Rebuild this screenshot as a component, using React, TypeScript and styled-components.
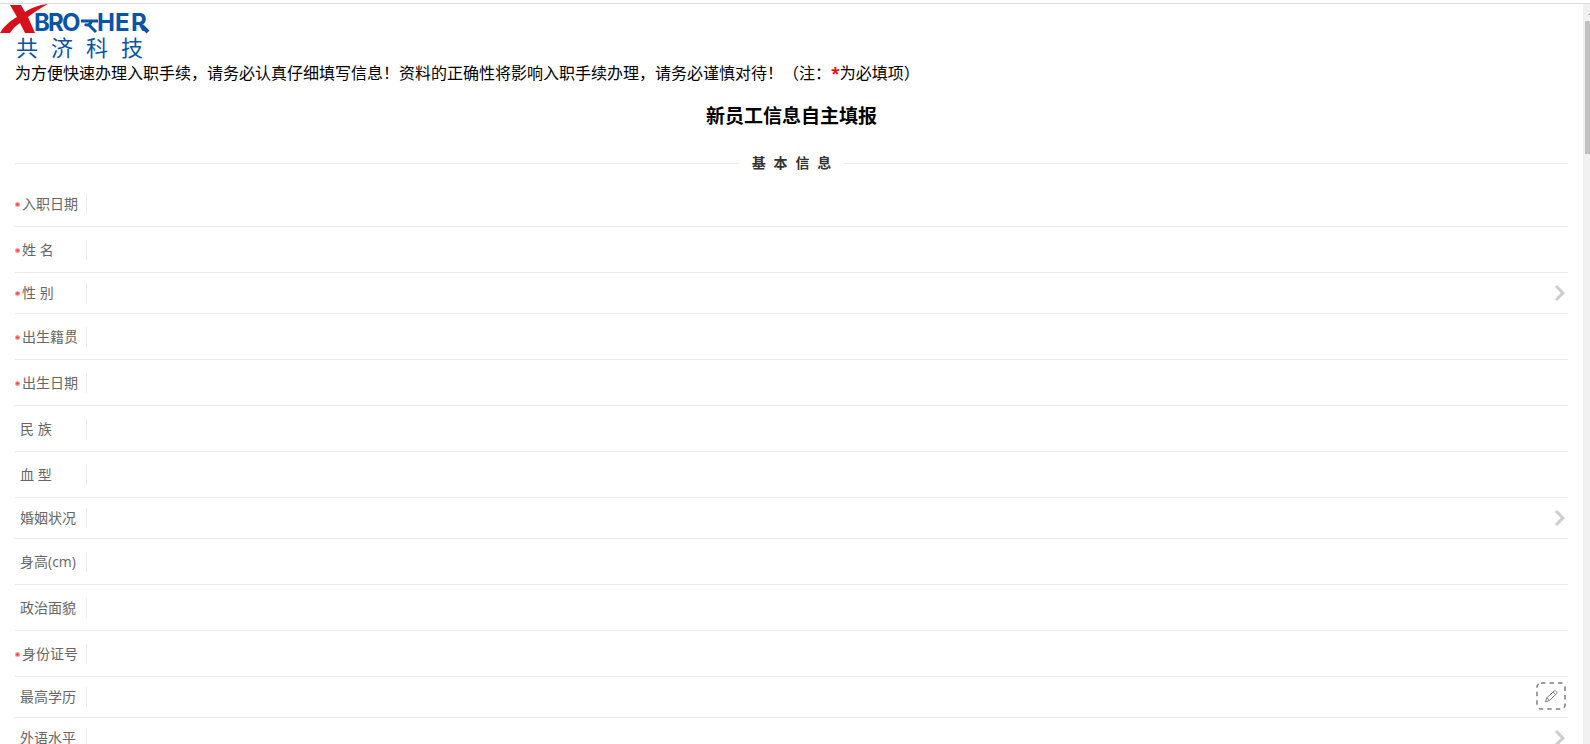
import React from "react";
import styled, { createGlobalStyle } from "styled-components";

const GlobalStyle = createGlobalStyle`
  * { box-sizing: border-box; }
  body {
    margin: 0;
    background: #fff;
    color: #000;
    font-family: "Open Sans", "Noto Sans CJK SC", sans-serif;
    font-size: 16px;
  }
`;

const Frame = styled.div`
  display: flex;
  flex-direction: column;
  height: 100vh;
  padding-top: 3px;
  overflow: hidden;
`;

const Viewport = styled.div`
  display: flex;
  flex: 1;
  min-height: 0;
  border-top: 1px solid #d9d9d9;
`;

const Page = styled.main`
  flex: 1;
  min-width: 0;
  overflow: hidden;
`;

const Logo = styled.svg`
  display: block;
  width: 150px;
  height: 56px;
  overflow: visible;
`;

const LatinMark = styled.text`
  font-family: Inter, sans-serif;
  font-size: 24px;
  font-weight: 700;
  fill: #0a53a5;
`;

const HanMark = styled.text`
  font-family: "Noto Sans CJK SC", sans-serif;
  font-size: 22px;
  font-weight: 400;
  fill: #0a53a5;
`;

const Content = styled.div`
  padding: 0 15px;
`;

const Notice = styled.p`
  margin: 0;
  line-height: 24px;
  font-family: "Noto Sans CJK SC", sans-serif;
`;

const Star = styled.span`
  color: #f00;
  font-family: "Open Sans", sans-serif;
  font-weight: 700;
  line-height: 16px;
`;

const Title = styled.h3`
  margin: 20px 0 25px;
  font-size: 19px;
  line-height: 24px;
  text-align: center;
`;

const Section = styled.fieldset`
  min-width: 0;
  margin: 0;
  padding: 0;
  border: 0;
`;

const SectionHeading = styled.legend`
  display: flex;
  align-items: center;
  gap: 13px;
  width: 100%;
  margin: 0 0 8px;
  padding: 0;
  color: #333;
  font-family: "Liberation Sans", "Noto Sans CJK SC", sans-serif;
  font-size: 14px;
  font-weight: 700;
  line-height: 20px;
  white-space: pre;

  &::before,
  &::after {
    content: "";
    flex: 1;
    border-top: 1px solid #ebebeb;
  }
`;

const Row = styled.div<{ $tall?: boolean }>`
  display: flex;
  align-items: center;
  padding: ${(p) => (p.$tall ? "13px 0 12px" : "10px 0")};
  border-bottom: 1px solid #ebebeb;
`;

const Label = styled.label<{ $required?: boolean }>`
  display: flex;
  align-items: center;
  gap: 2px;
  flex: none;
  width: 72px;
  height: 20px;
  padding-left: ${(p) => (p.$required ? "0" : "5px")};
  border-right: 1px solid #ebebeb;
  color: #666;
  font-size: 14px;
  line-height: 20px;
  white-space: pre;
`;

const RequiredDot = styled.svg`
  flex: none;
  width: 5px;
  height: 5px;
`;

const TextField = styled.input`
  flex: 1;
  min-width: 0;
  height: 20px;
  padding: 0 8px;
  border: 0;
  outline: 0;
  background: transparent;
  font: inherit;
`;

const SelectField = styled.select`
  flex: 1;
  min-width: 0;
  height: 20px;
  padding: 0 8px;
  border: 0;
  outline: 0;
  appearance: none;
  background: transparent;
  font: inherit;
`;

const Chevron = styled.svg`
  flex: none;
  width: 10px;
  height: 18px;
  margin-right: 3px;
`;

const EditButton = styled.button`
  flex: none;
  width: 30px;
  height: 28px;
  margin: -5px 2px -3px 0;
  padding: 0;
  border: 0;
  background: transparent;
  cursor: pointer;

  svg {
    display: block;
  }
`;

const Scrollbar = styled.div`
  flex: none;
  width: 7px;
  overflow: hidden;
  background: #f1f1f1;
`;

const ScrollArrow = styled.svg`
  display: block;
  width: 7px;
  height: 17px;
`;

const ScrollThumb = styled.div`
  height: 18%;
  margin-left: 2px;
  background: #c1c1c1;
`;

type Kind = "text" | "select" | "edit";

interface Field {
  id: string;
  label: string;
  kind: Kind;
  required?: boolean;
}

const fields: Field[] = [
  { id: "entry-date", label: "入职日期", kind: "text", required: true },
  { id: "name", label: "姓 名", kind: "text", required: true },
  { id: "gender", label: "性 别", kind: "select", required: true },
  { id: "birthplace", label: "出生籍贯", kind: "text", required: true },
  { id: "birthday", label: "出生日期", kind: "text", required: true },
  { id: "nation", label: "民 族", kind: "text" },
  { id: "blood", label: "血 型", kind: "text" },
  { id: "marriage", label: "婚姻状况", kind: "select" },
  { id: "height", label: "身高(cm)", kind: "text" },
  { id: "politics", label: "政治面貌", kind: "text" },
  { id: "id-number", label: "身份证号", kind: "text", required: true },
  { id: "education", label: "最高学历", kind: "edit" },
  { id: "language", label: "外语水平", kind: "select" },
];

function CompanyLogo() {
  return (
    <Logo viewBox="0 0 150 56" role="img" aria-label="XBROTHER 共济科技">
      <path
        d="M10 1H21L25 8C31 4 38 1 48 0C41 4 34 8 28 13L35 29H25L20 19C15 22 12 26 10 29H0C4 22 10 17 17 13Z"
        fill="#d7101e"
      />
      <LatinMark x="34 48 62" y="27">BRO</LatinMark>
      <path
        d="M81 17H98M91 17C91 21 87 22 85 20M89 21L96 28"
        fill="none"
        stroke="#0a53a5"
        strokeWidth="3"
      />
      <LatinMark x="97 115 131" y="27">HER</LatinMark>
      <path d="M142 22L148 28" stroke="#0a53a5" strokeWidth="4" />
      <HanMark x="16 51 86 121" y="52">共济科技</HanMark>
    </Logo>
  );
}

function RequiredMark() {
  return (
    <RequiredDot viewBox="0 0 5 5" aria-hidden="true">
      <circle cx="2.5" cy="2.5" r="2.5" fill="#ff9c9c" />
      <circle cx="2.5" cy="2.5" r="1.3" fill="#fa3c3c" />
    </RequiredDot>
  );
}

function PencilIcon() {
  return (
    <svg width="30" height="28" viewBox="0 0 30 28" fill="none" aria-hidden="true">
      <rect x="1" y="1" width="28" height="26" rx="4" stroke="#808080" strokeWidth="1.5" strokeDasharray="4.5 4" />
      <path
        d="M9.5 20L10.8 15.8L18 9.2C19.5 8 22 9.6 20.6 11.7L13.3 18.5ZM10.8 15.8L13.3 18.5M17 10L19.7 12.6"
        stroke="#808080"
        strokeWidth="1"
        strokeLinejoin="round"
      />
    </svg>
  );
}

function FieldRow({ id, label, kind, required }: Field) {
  return (
    <Row $tall={kind === "text"}>
      <Label htmlFor={id} $required={required}>
        {required && <RequiredMark />}
        {label}
      </Label>
      {kind === "select" ? (
        <SelectField id={id} defaultValue="">
          <option value="" />
        </SelectField>
      ) : (
        <TextField id={id} type="text" required={required} />
      )}
      {kind === "select" && (
        <Chevron viewBox="0 0 10 18" fill="none" aria-hidden="true">
          <path d="M1 2L8 9L1 16" stroke="#ccc" strokeWidth="3" />
        </Chevron>
      )}
      {kind === "edit" && (
        <EditButton type="button" aria-label="编辑">
          <PencilIcon />
        </EditButton>
      )}
    </Row>
  );
}

export default function App() {
  return (
    <>
      <GlobalStyle />
      <Frame>
        <Viewport>
          <Page>
            <CompanyLogo />
            <Content>
              <Notice>
                为方便快速办理入职手续，请务必认真仔细填写信息！资料的正确性将影响入职手续办理，请务必谨慎对待！（注：<Star>*</Star>为必填项）
              </Notice>
              <Title>新员工信息自主填报</Title>
              <Section>
                <SectionHeading>{"基  本  信  息"}</SectionHeading>
                {fields.map((field) => (
                  <FieldRow key={field.id} {...field} />
                ))}
              </Section>
            </Content>
          </Page>
          <Scrollbar aria-hidden="true">
            <ScrollArrow viewBox="0 0 7 17">
              <path d="M5 11L9 7V11Z" fill="#a3a3a3" />
            </ScrollArrow>
            <ScrollThumb />
          </Scrollbar>
        </Viewport>
      </Frame>
    </>
  );
}
